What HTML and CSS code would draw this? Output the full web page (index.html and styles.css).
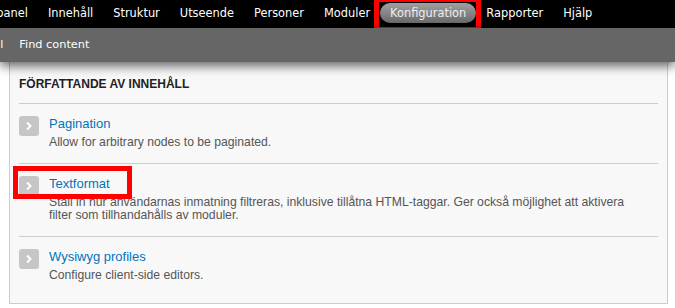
FILE: index.html
```html
<!DOCTYPE html>
<html lang="sv">
<head>
    <meta charset="UTF-8">
    <title>Konfiguration</title>
    <link rel="stylesheet" href="styles.css">
</head>
<body>

    <!-- Admin menu -->
    <div class="menu">
        <ul class="menu-list">
            <li><a href="#">Kontrollpanel</a></li>
            <li><a href="#">Innehåll</a></li>
            <li><a href="#">Struktur</a></li>
            <li><a href="#">Utseende</a></li>
            <li><a href="#">Personer</a></li>
            <li><a href="#">Moduler</a></li>
            <li class="active"><a href="#">Konfiguration</a></li>
            <li><a href="#">Rapporter</a></li>
            <li><a href="#">Hjälp</a></li>
        </ul>
    </div>

    <!-- Shortcuts -->
    <div class="shortcuts">
        <ul class="shortcut-list">
            <li><a href="#">Lägg till innehåll</a></li>
            <li><a href="#">Find content</a></li>
        </ul>
    </div>

    <!-- Config panel -->
    <div class="panel">
        <h3 class="panel-title">FÖRFATTANDE AV INNEHÅLL</h3>

        <div class="item">
            <svg class="item-icon" width="20" height="20" viewBox="0 0 20 20"><rect width="20" height="20" rx="3" fill="#c6c6c6"/><path d="M8 6.5 L11.5 10 L8 13.5" fill="none" stroke="#fff" stroke-width="2"/></svg>
            <div class="item-body">
                <a class="item-link" href="#">Pagination</a>
                <p class="item-desc">Allow for arbitrary nodes to be paginated.</p>
            </div>
        </div>

        <div class="item">
            <svg class="item-icon" width="20" height="20" viewBox="0 0 20 20"><rect width="20" height="20" rx="3" fill="#c6c6c6"/><path d="M8 6.5 L11.5 10 L8 13.5" fill="none" stroke="#fff" stroke-width="2"/></svg>
            <div class="item-body">
                <a class="item-link" href="#">Textformat</a>
                <p class="item-desc">Ställ in hur användarnas inmatning filtreras, inklusive tillåtna HTML-taggar. Ger också möjlighet att aktivera filter som tillhandahålls av moduler.</p>
            </div>
        </div>

        <div class="item">
            <svg class="item-icon" width="20" height="20" viewBox="0 0 20 20"><rect width="20" height="20" rx="3" fill="#c6c6c6"/><path d="M8 6.5 L11.5 10 L8 13.5" fill="none" stroke="#fff" stroke-width="2"/></svg>
            <div class="item-body">
                <a class="item-link" href="#">Wysiwyg profiles</a>
                <p class="item-desc">Configure client-side editors.</p>
            </div>
        </div>
    </div>

    <!-- Red highlight marks -->
    <div class="mark mark-menu"></div>
    <div class="mark mark-item"></div>

</body>
</html>
```

FILE: styles.css
```css
* {
    margin: 0;
    padding: 0;
    box-sizing: border-box;
}

body {
    background: #fff;
    font-family: "Liberation Sans", Arial, sans-serif;
    overflow: hidden;
}

ul {
    list-style: none;
}

a {
    text-decoration: none;
}

/* Admin menu */
.menu {
    background: #000;
    height: 28px;
    padding-top: 3px;
    white-space: nowrap;
}

.menu-list {
    display: flex;
    margin-left: -57px;
}

.menu-list a {
    display: block;
    padding: 0 10px;
    line-height: 20px;
    font-family: "DejaVu Sans", Verdana, sans-serif;
    font-size: 11.4px;
    color: #fff;
}

.menu-list .active a {
    background: linear-gradient(#a0a0a0, #6a6a6a);
    border-radius: 10px;
    color: #eee;
}

/* Shortcuts */
.shortcuts {
    position: relative;
    z-index: 1;
    background: #666;
    height: 34px;
    box-shadow: 0 4px 10px rgba(0, 0, 0, 0.6);
    white-space: nowrap;
}

.shortcut-list {
    display: flex;
    margin-left: -98px;
}

.shortcut-list a {
    display: block;
    padding: 0 8px;
    line-height: 34px;
    font-family: "DejaVu Sans", Verdana, sans-serif;
    font-size: 11.3px;
    color: #fff;
}

/* Panel */
.panel {
    margin-left: 9px;
    width: 659px;
    background: #f8f8f8;
    border: 1px solid #ccc;
    border-top: none;
    padding: 14px 9px 21px;
}

.panel-title {
    font-size: 12px;
    line-height: 16px;
    font-weight: bold;
    color: #222;
    padding-bottom: 11px;
    border-bottom: 1px solid #ccc;
}

.item {
    display: flex;
    gap: 10px;
    padding: 11px 0 13px;
    border-bottom: 1px solid #ccc;
}

.item:last-child {
    border-bottom: none;
    padding-bottom: 0;
}

.item-icon {
    flex: none;
    margin-top: 1px;
}

.item-body {
    padding-right: 20px;
}

.item-link {
    display: block;
    font-size: 13px;
    line-height: 18px;
    color: #0074bd;
}

.item-desc {
    margin-top: 3px;
    font-size: 12.2px;
    line-height: 13.5px;
    color: #555;
}

/* Red highlight marks */
.mark {
    position: absolute;
    border: 5px solid #f00;
}

.mark-menu {
    left: 374px;
    top: -3px;
    width: 107px;
    height: 35px;
}

.mark-item {
    left: 13px;
    top: 166px;
    width: 119px;
    height: 33px;
}
```
